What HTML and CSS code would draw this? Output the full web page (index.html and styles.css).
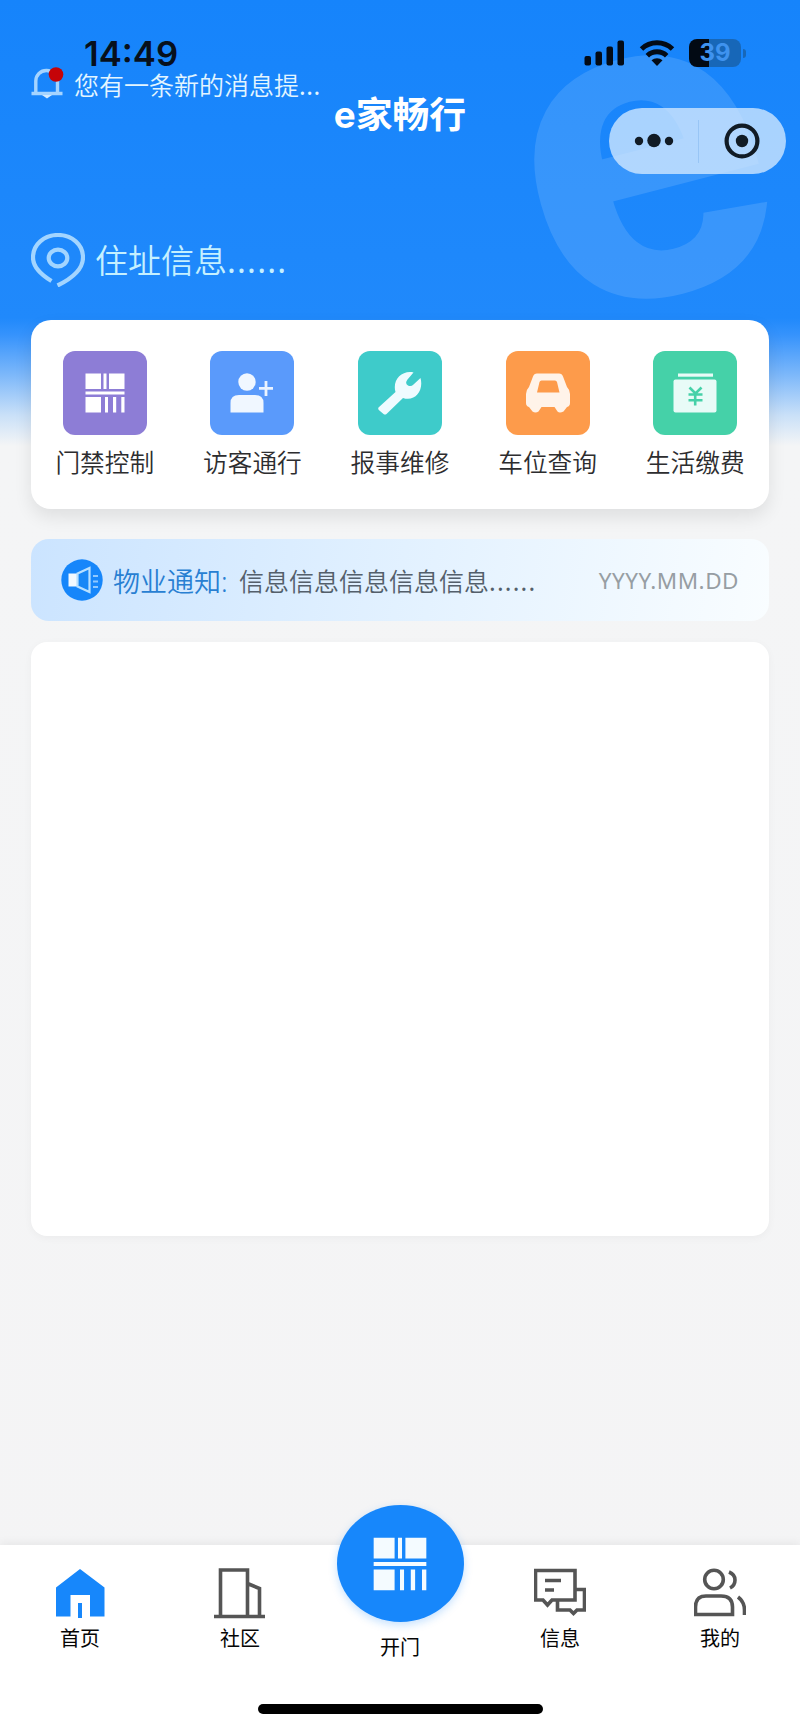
FILE: index.html
```html
<!DOCTYPE html>
<html lang="zh-CN">
<head>
<meta charset="utf-8">
<title>e家畅行</title>
<link rel="stylesheet" href="styles.css">
</head>
<body>
<svg class="defs" width="0" height="0">
  <symbol id="gate" viewBox="0 0 40 40">
    <path d="M.5.5h15.500v15.500H.5zM18.500.5h3v15.500h-3zM24 .5h15.500v15.500H24zM.5 18.500h39v3H.5zM.5 24h15.500v15.500H.5zM20 24h3v15.500h-3zM28 24h3.200v15.500H28zM36.300 24h3.200v15.500h-3.200z"/>
  </symbol>
</svg>
<div class="screen">
  <svg class="watermark" viewBox="0 0 260 260" aria-hidden="true"><text class="watermark-letter" x="0" y="0" text-anchor="middle" transform="translate(126 127) scale(1.075 1.040) rotate(-15) translate(0 113)">e</text></svg>

  <header class="header">
    <div class="status">
      <span class="clock">14:49</span>
      <div class="status-icons">
        <svg width="41" height="26" viewBox="0 0 41 26"><rect x="0.500" y="16" width="6.500" height="9.500" rx="2"/><rect x="11.500" y="11.500" width="6.500" height="14" rx="2"/><rect x="22.500" y="6.500" width="6.500" height="19" rx="2"/><rect x="33.500" y="0.500" width="6.500" height="25" rx="2"/></svg>
        <svg class="wifi" width="36" height="26" viewBox="0 0 36 26"><path class="arc" d="M2.500 9a22.500 22.500 0 0 1 31 0M8.300 15.700a14 14 0 0 1 19.400 0"/><path d="M12.500 20.300a8.300 8.300 0 0 1 11 0L18 26z"/></svg>
        <div class="battery"><span class="battery-body">39</span><i class="battery-nub"></i></div>
      </div>
    </div>
    <div class="nav">
      <div class="message">
        <svg width="34" height="32" viewBox="0 0 34 32"><path class="bell" d="M1.500 26.500h31M5.800 26V14a10.500 10.500 0 0 1 10.700-10.500c7 0 11 4.500 11 10.500v12"/><path class="bell-base" d="M12 28h10l-5 3.500z"/><circle cx="26" cy="7.500" r="7.300" fill="#c50408"/></svg>
        <span>您有一条新的消息提<span class="dots">...</span></span>
      </div>
      <h1 class="title">e家畅行</h1>
      <div class="capsule">
        <svg width="177" height="66" viewBox="0 0 177 66"><g fill="#111b25"><circle cx="30" cy="33" r="4.200"/><circle cx="45" cy="32.500" r="6.700"/><circle cx="60" cy="33" r="4.200"/><circle cx="133" cy="33" r="6.200"/></g><path d="M89.500 12v43" stroke="#98c5f5"/><circle cx="133" cy="33" r="15.400" fill="none" stroke="#111b25" stroke-width="4.200"/></svg>
      </div>
    </div>
    <div class="address">
      <svg width="54" height="54" viewBox="0 0 54 54"><path d="M20.500 48C9 41 2 34 2 24.500 2 11.500 13 2 27 2s25 9.500 25 22.500c0 13-12 21.500-25.500 28"/><ellipse cx="27" cy="25" rx="9.300" ry="8.300"/></svg>
      <span>住址信息<span class="dots">......</span></span>
    </div>
  </header>

  <main class="content">
    <section class="services">
      <div class="service"><div class="tile violet"><svg width="40" height="40"><use href="#gate"/></svg></div><span>门禁控制</span></div>
      <div class="service"><div class="tile blue"><svg width="44" height="40" viewBox="0 0 44 40"><circle cx="17" cy="9" r="8.700"/><path d="M.5 39.500V30Q.5 22 9 22h16q8.500 0 8.500 8v9.500z"/><path d="M29 15.300h14M36 8v15" stroke="#eaf3ff" stroke-width="2.800"/></svg></div><span>访客通行</span></div>
      <div class="service"><div class="tile teal"><svg width="44" height="44" viewBox="0 0 44 44"><path d="M.5 36.500 17.500 21C14 9 24-1 35.500 1.500L29.500 8.500q-3 4 .5 6 3 1.500 5.500-1l7-6.500C46 20 37 31 25 27L8.500 43q-1.500 1-3 0L.8 39q-1-1.200-.3-2.500z"/></svg></div><span>报事维修</span></div>
      <div class="service"><div class="tile orange"><svg width="44" height="40" viewBox="0 0 44 40"><path fill-rule="evenodd" d="M11 .5h22q3 0 4 3L41 14q3 3 3 7v9q0 3-3 4l-3.500 4.500q-4 2-6 0L28.500 34h-13l-3 4.500q-3 2-6 0L3 34q-3-1-3-4v-9q0-4 3-7L7 3.500q1-3 4-3zM15.500 7.500q-1.500 0-2 1.500L11 19.500h22.500L31 9q-.5-1.500-2-1.500z"/></svg></div><span>车位查询</span></div>
      <div class="service"><div class="tile green"><svg width="44" height="40" viewBox="0 0 44 40"><rect x="5" y=".5" width="35" height="3.200"/><rect x=".5" y="6.500" width="43" height="33" rx="2"/><path d="m16.500 14.500 6 6 6-6M22.200 20v12.500M15.500 21.500h14M15.500 27.300h14" fill="none" stroke="#45d1a8" stroke-width="2.600"/></svg></div><span>生活缴费</span></div>
    </section>

    <section class="notice">
      <svg width="42" height="42" viewBox="0 0 42 42"><circle cx="21" cy="21" r="20.700" fill="#1686fa"/><path d="M7.500 14.500h9v13h-9z" fill="#f2f9ff"/><path d="m16.500 14.500 12-5.500v24l-12-5.500z" fill="#1787f6" stroke="#b8e0ff" stroke-width="2.200"/><path d="M32 17h5M32 22.500h5M32 28h5" stroke="#8fc8ff" stroke-width="1.800"/></svg>
      <span class="notice-label">物业通知:</span>
      <span class="notice-text">信息信息信息信息信息<span class="dots">......</span></span>
      <time class="notice-date">YYYY.MM.DD</time>
    </section>

    <section class="panel"></section>
  </main>

  <nav class="tabbar">
    <div class="tabs">
      <a class="tab"><svg width="52" height="52" viewBox="0 0 52 52"><path fill="#1787fb" d="M26 2 50.500 20.500v29H36V28H16.500v21.500H2v-29zM24 36h4v15h-4z"/></svg><span>首页</span></a>
      <a class="tab"><svg class="line" width="52" height="52" viewBox="0 0 52 52"><path d="M0 49.500h51M6.500 49V3h27v46M33.500 16.500 45.500 21.500V49"/></svg><span>社区</span></a>
      <a class="tab tab-open"><div class="open-button"><svg width="54" height="54"><use href="#gate"/></svg></div><span>开门</span></a>
      <a class="tab"><svg class="line" width="52" height="52" viewBox="0 0 52 52"><path d="M1.500 3.500H41v29.500H18l-4.500 5-4.500-5H1.500zM11 13.500h16M11 23h9M42.500 22.500h8V43H43l-3.500 3.500L36 43H23.500v-8.500"/></svg><span>信息</span></a>
      <a class="tab"><svg class="line" width="52" height="52" viewBox="0 0 52 52"><circle cx="20" cy="12.500" r="9.300"/><path d="M1.500 47.500V40Q1.500 29 12 29h15q11.500 0 11.500 11v7.500zM35 5q6 2.500 6 8t-5 8M44 30q6.500 5 6.500 13v5"/></svg><span>我的</span></a>
    </div>
    <div class="home-indicator"></div>
  </nav>
</div>
</body>
</html>
```

FILE: styles.css
```css
* { box-sizing: border-box; }

body {
  margin: 0;
  font-family: "Noto Sans", "Noto Sans CJK SC", sans-serif;
  font-weight: 350;
  color: #2d2d2f;
}

svg { display: block; flex: none; }
.defs { position: absolute; }

.screen {
  position: relative;
  display: flex;
  flex-direction: column;
  width: 800px;
  height: 1731px;
  overflow: hidden;
  background: linear-gradient(#1684fb 0, #2089fb 318px, #3693fc 335px, #7db8fa 375px, #c9e0f8 415px, #f4f5f6 446px, #f4f4f5 100%);
}

.watermark {
  position: absolute;
  left: 520px;
  top: 47px;
  width: 260px;
  height: 260px;
  overflow: visible;
}

.watermark-letter {
  font: bold 414px "Liberation Sans", Arial, sans-serif;
  fill: #fff;
  stroke: #fff;
  stroke-width: 6;
  opacity: 0.12;
}

.header {
  position: relative;
  height: 320px;
}

.status {
  display: flex;
  justify-content: space-between;
  height: 67px;
  padding: 39px 54px 0 84px;
}

.clock {
  font: 600 34.700px/28px Inter, sans-serif;
  color: #07101c;
}

.status-icons {
  display: flex;
  align-items: center;
  height: 28px;
  gap: 14px;
  fill: #030b16;
}

.arc {
  fill: none;
  stroke: #030b16;
  stroke-width: 5;
}

.battery {
  display: flex;
  align-items: center;
  gap: 2px;
}

.battery-body {
  width: 52px;
  height: 28px;
  border-radius: 8px;
  background: linear-gradient(90deg, #020a14 0 20px, #1767b8 20px);
  font: 700 24px/28px Inter, sans-serif;
  text-align: center;
  color: #3f93ef;
}

.battery-nub {
  width: 3px;
  height: 9px;
  border-radius: 0 4px 4px 0;
  background: #1767b8;
}

.nav {
  display: grid;
  grid-template-columns: 1fr auto 1fr;
  height: 107px;
  padding: 0 14px;
}

.message {
  display: flex;
  width: 300px;
  margin-left: 16px;
  margin-right: -60px;
  gap: 10px;
  font-size: 25px;
  line-height: 36px;
  white-space: nowrap;
  color: #e3f5ff;
}

.dots {
  font-weight: 400;
  letter-spacing: 0.6px;
}

.bell {
  fill: none;
  stroke: #a5d4ff;
  stroke-width: 3.4;
}

.bell-base { fill: #d2eaff; }

.title {
  margin: 22px 0 0;
  font: 700 36.800px/52px Inter, "Noto Sans CJK SC", sans-serif;
  white-space: nowrap;
  text-align: center;
  color: #fff;
}

.capsule {
  justify-self: end;
  width: 177px;
  height: 66px;
  margin-top: 41px;
  border-radius: 33px;
  background: rgba(220, 237, 255, 0.74);
}

.address {
  display: flex;
  gap: 10px;
  margin: 59px 0 0 31px;
  font-size: 33px;
  line-height: 56px;
  color: #c5f0ff;
}

.address .dots { letter-spacing: 1.200px; }

.address svg {
  fill: none;
  stroke: #a3d5ff;
  stroke-width: 4.200;
}

.content {
  position: relative;
  padding: 0 31px;
}

.services {
  display: grid;
  grid-template-columns: repeat(5, 1fr);
  height: 189px;
  padding-top: 31px;
  border-radius: 20px;
  background: #fff;
  box-shadow: 0 8px 18px rgba(0, 0, 0, 0.09);
}

.service {
  display: flex;
  flex-direction: column;
  align-items: center;
  gap: 10px;
  font-size: 24.700px;
  line-height: 36px;
}

.tile {
  display: grid;
  place-items: center;
  width: 84px;
  height: 84px;
  border-radius: 12px;
  fill: #f0f7ff;
}

.violet { background: #8d7dd6; fill: #fff; }
.blue { background: #5a9afb; }
.teal { background: #3ecbca; fill: #effbff; }
.orange { background: #fd9b4b; fill: #fff3e9; }
.green { background: #45d1a8; fill: #e8fbf7; }

.notice {
  display: flex;
  align-items: center;
  height: 82px;
  margin-top: 30px;
  padding: 0 31px 0 30px;
  border-radius: 18px;
  background: linear-gradient(100deg, #cbe4ff, #e2f1ff 50%, #f9fdff);
  white-space: nowrap;
}

.notice-label {
  width: 126px;
  margin-left: 10px;
  font-size: 27px;
  color: #287fd2;
}

.notice-text {
  font-size: 25px;
  color: #545f6b;
}

.notice-text .dots { letter-spacing: 1.200px; }

.notice-date {
  margin-left: auto;
  margin-right: -1px;
  font-size: 22.500px;
  font-weight: 400;
  letter-spacing: 0.5px;
  color: #979ea3;
}

.panel {
  height: 594px;
  margin-top: 21px;
  border-radius: 16px;
  background: #fff;
  box-shadow: 0 2px 8px rgba(0, 0, 0, 0.04);
}

.tabbar {
  position: relative;
  display: flex;
  flex-direction: column;
  align-items: center;
  height: 186px;
  margin-top: auto;
  background: #fff;
  box-shadow: 0 -3px 8px rgba(0, 0, 0, 0.05);
}

.tabs {
  display: grid;
  grid-template-columns: repeat(5, 1fr);
  width: 100%;
  height: 159px;
}

.tab {
  display: flex;
  flex-direction: column;
  align-items: center;
  gap: 5px;
  padding-top: 22px;
  font-size: 20px;
  font-weight: 400;
  line-height: 30px;
  color: #050505;
}

.line {
  fill: none;
  stroke: #555;
  stroke-width: 3.6;
}

.tab-open {
  gap: 11px;
  margin-top: -40px;
  padding-top: 0;
}

.open-button {
  display: grid;
  place-items: center;
  width: 127px;
  height: 117px;
  border-radius: 50%;
  background: #1787fb;
  box-shadow: 0 3px 9px rgba(23, 135, 251, 0.25);
  fill: #f4fbff;
}

.home-indicator {
  width: 285px;
  height: 10px;
  border-radius: 5px;
  background: #000;
}
```
